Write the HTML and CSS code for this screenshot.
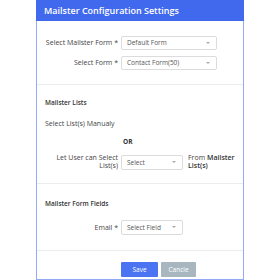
FILE: index.html
```html
<!DOCTYPE html>
<html lang="en">
<head>
  <meta charset="utf-8">
  <title>Mailster Configuration Settings</title>
  <link rel="stylesheet" href="styles.css">
</head>
<body>
  <div class="modal">
    <div class="modal-head">Mailster Configuration Settings</div>

    <!-- form selection -->
    <div class="section first">
      <div class="row">
        <label class="lbl">Select Mailster Form *</label>
        <div class="select wide">Default Form<span class="caret"></span></div>
      </div>
      <div class="row">
        <label class="lbl">Select Form *</label>
        <div class="select wide">Contact Form(50)<span class="caret"></span></div>
      </div>
    </div>

    <!-- lists -->
    <div class="section lists">
      <h4>Mailster Lists</h4>
      <div class="manual">Select List(s) Manualy</div>
      <div class="or">OR</div>
      <div class="row">
        <label class="lbl">Let User can Select List(s)</label>
        <div class="select">Select<span class="caret"></span></div>
        <div class="from">From <b>Mailster</b><br><b>List(s)</b></div>
      </div>
    </div>

    <!-- fields -->
    <div class="section fields">
      <h4>Mailster Form Fields</h4>
      <div class="row">
        <label class="lbl">Email *</label>
        <div class="select">Select Field<span class="caret"></span></div>
      </div>
    </div>

    <div class="modal-foot">
      <button class="btn save">Save</button>
      <button class="btn cancel">Cancle</button>
    </div>
  </div>
</body>
</html>
```

FILE: styles.css
```css
/* --- Page --- */
*{box-sizing:border-box}
body{margin:0;background:#fff;font-family:"Open Sans",sans-serif;color:#444}

/* --- Modal --- */
.modal{width:208px;margin-left:36px;height:280px;border:1px solid #94aaf6;border-top:0;background:#fff}
.modal-head{height:21px;margin:0 -1px;padding-left:8px;background:#4169ee;color:#fff;font-size:9px;font-weight:600;line-height:21px}
.section{border-bottom:1px solid #ececec}
.section.first{height:64px;padding-top:15px;display:flex;flex-direction:column;gap:6px}
.section.lists{height:99px;padding:14px 0 0 8px}
.section.fields{height:67px;padding:16px 0 0 8px}
.section h4{margin:0;font-size:6.5px;font-weight:600;color:#333;line-height:8px}

/* --- Rows --- */
.row{display:flex;align-items:center;gap:3px}
.lbl{width:81px;flex:none;text-align:right;font-size:7px;line-height:8px;color:#444}
.section.lists .lbl,.section.fields .lbl{width:73px}
.select{position:relative;flex:none;width:62px;height:15px;border:1px solid #dcdcdc;border-radius:2px;padding-left:5px;font-size:6.5px;line-height:13px;color:#555}
.select.wide{width:96px;height:14px;line-height:12px}
.caret{position:absolute;right:6px;top:5px;border:2px solid transparent;border-top:2px solid #aaa}
.manual{margin-top:13px;font-size:7px;color:#444;line-height:8px}
.or{margin:10px 0 8px 78px;font-size:6.5px;font-weight:700;color:#333;line-height:8px}
.from{flex:none;width:56px;margin-left:2px;font-size:7px;line-height:8px;color:#444;white-space:nowrap}
.from b{font-weight:600;color:#333}
.section.fields .row{margin-top:12px}

/* --- Footer --- */
.modal-foot{padding:11px 0 0 84px;display:flex;gap:3px}
.btn{height:15px;border:0;border-radius:1px;color:#fff;font-family:inherit;font-size:6.5px;padding:0}
.save{width:37px;background:#4a74f2}
.cancel{width:35px;background:#a8b7bf}
```
